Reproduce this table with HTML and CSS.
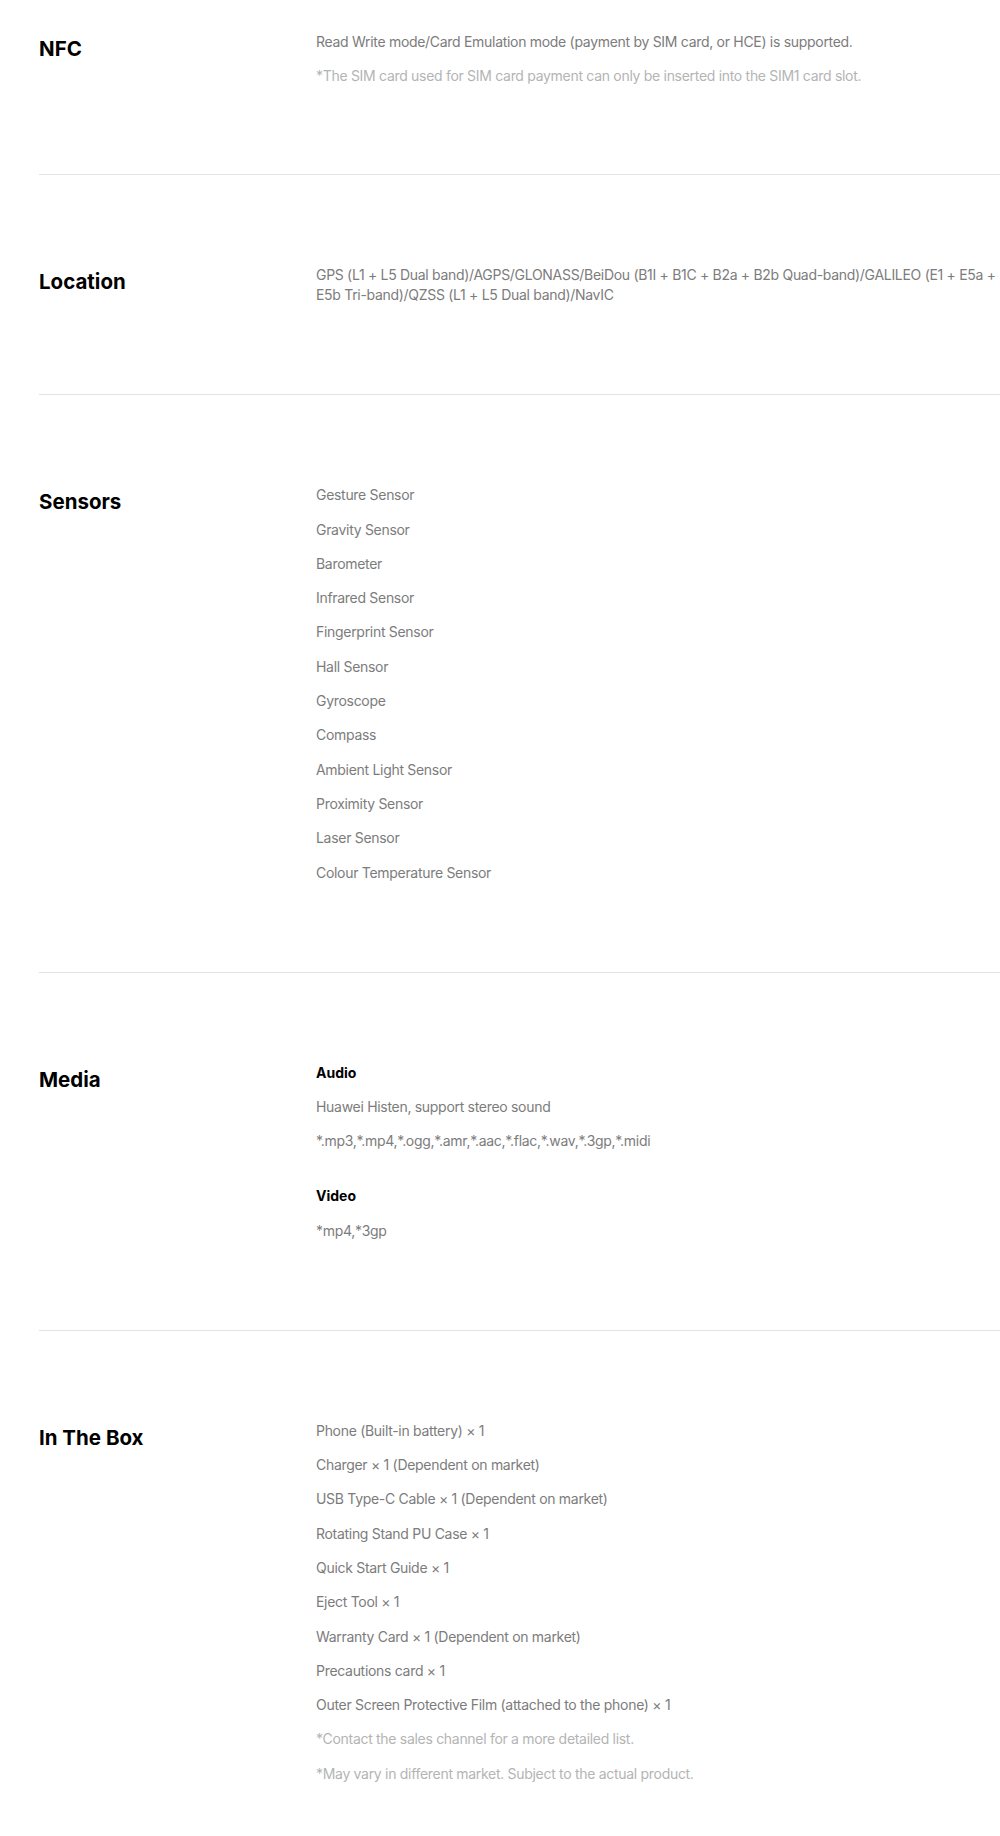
FILE: index.html
```html
<!DOCTYPE html>
<html lang="en">
<head>
  <meta charset="UTF-8" />
  <title>Specs</title>
  <meta name="viewport" content="width=device-width, initial-scale=1.0" />
  <link rel="stylesheet" href="styles.css">
</head>
<body>
  <div class="spec-list">
    <section class="spec-row first">
      <h2 class="spec-title">NFC</h2>
      <div class="spec-body">
        <p>Read Write mode/Card Emulation mode (payment by SIM card, or HCE) is supported.</p>
        <p class="note">*The SIM card used for SIM card payment can only be inserted into the SIM1 card slot.</p>
      </div>
    </section>

    <section class="spec-row">
      <h2 class="spec-title">Location</h2>
      <div class="spec-body">
        <p>GPS (L1 + L5 Dual band)/AGPS/GLONASS/BeiDou (B1I + B1C + B2a + B2b Quad-band)/GALILEO (E1 + E5a + E5b Tri-band)/QZSS (L1 + L5 Dual band)/NavIC</p>
      </div>
    </section>

    <section class="spec-row">
      <h2 class="spec-title">Sensors</h2>
      <div class="spec-body">
        <p>Gesture Sensor</p>
        <p>Gravity Sensor</p>
        <p>Barometer</p>
        <p>Infrared Sensor</p>
        <p>Fingerprint Sensor</p>
        <p>Hall Sensor</p>
        <p>Gyroscope</p>
        <p>Compass</p>
        <p>Ambient Light Sensor</p>
        <p>Proximity Sensor</p>
        <p>Laser Sensor</p>
        <p>Colour Temperature Sensor</p>
      </div>
    </section>

    <section class="spec-row">
      <h2 class="spec-title">Media</h2>
      <div class="spec-body">
        <div class="spec-group">
          <h3>Audio</h3>
          <p>Huawei Histen, support stereo sound</p>
          <p>*.mp3,*.mp4,*.ogg,*.amr,*.aac,*.flac,*.wav,*.3gp,*.midi</p>
        </div>
        <div class="spec-group">
          <h3>Video</h3>
          <p>*mp4,*3gp</p>
        </div>
      </div>
    </section>

    <section class="spec-row last">
      <h2 class="spec-title">In The Box</h2>
      <div class="spec-body">
        <p>Phone (Built-in battery) × 1</p>
        <p>Charger × 1 (Dependent on market)</p>
        <p>USB Type-C Cable × 1 (Dependent on market)</p>
        <p>Rotating Stand PU Case × 1</p>
        <p>Quick Start Guide × 1</p>
        <p>Eject Tool × 1</p>
        <p>Warranty Card × 1 (Dependent on market)</p>
        <p>Precautions card × 1</p>
        <p>Outer Screen Protective Film (attached to the phone) × 1</p>
        <p class="note">*Contact the sales channel for a more detailed list.</p>
        <p class="note">*May vary in different market. Subject to the actual product.</p>
      </div>
    </section>
  </div>
</body>
</html>
```

FILE: styles.css
```css
body {
  margin: 0;
  font-family: Inter, "Noto Sans", sans-serif;
  background: #fff;
  color: #000;
}

.spec-list {
  padding-left: 39px;
}

.spec-row {
  display: flex;
  padding: 90px 0 89px;
  border-bottom: 1px solid #e3e3e3;
}

.spec-row.first {
  padding-top: 32px;
  padding-bottom: 88px;
}

.spec-row.last {
  border-bottom: none;
  padding-bottom: 52px;
}

.spec-title {
  flex: 0 0 277px;
  margin: 0;
  font-size: 20.5px;
  font-weight: 700;
  line-height: 33px;
}

.spec-body {
  flex: 1;
  display: flex;
  flex-direction: column;
  gap: 14.3px;
}

.spec-body p {
  margin: 0;
  font-size: 14px;
  line-height: 20px;
  letter-spacing: -0.3px;
  color: #7c7c7c;
}

.spec-body .note {
  color: #b4b4b4;
}

.spec-group {
  display: flex;
  flex-direction: column;
  gap: 14.3px;
}

.spec-group + .spec-group {
  margin-top: 21px;
}

.spec-group h3 {
  margin: 0;
  font-size: 14px;
  font-weight: 700;
  line-height: 20px;
  color: #000;
}
```
